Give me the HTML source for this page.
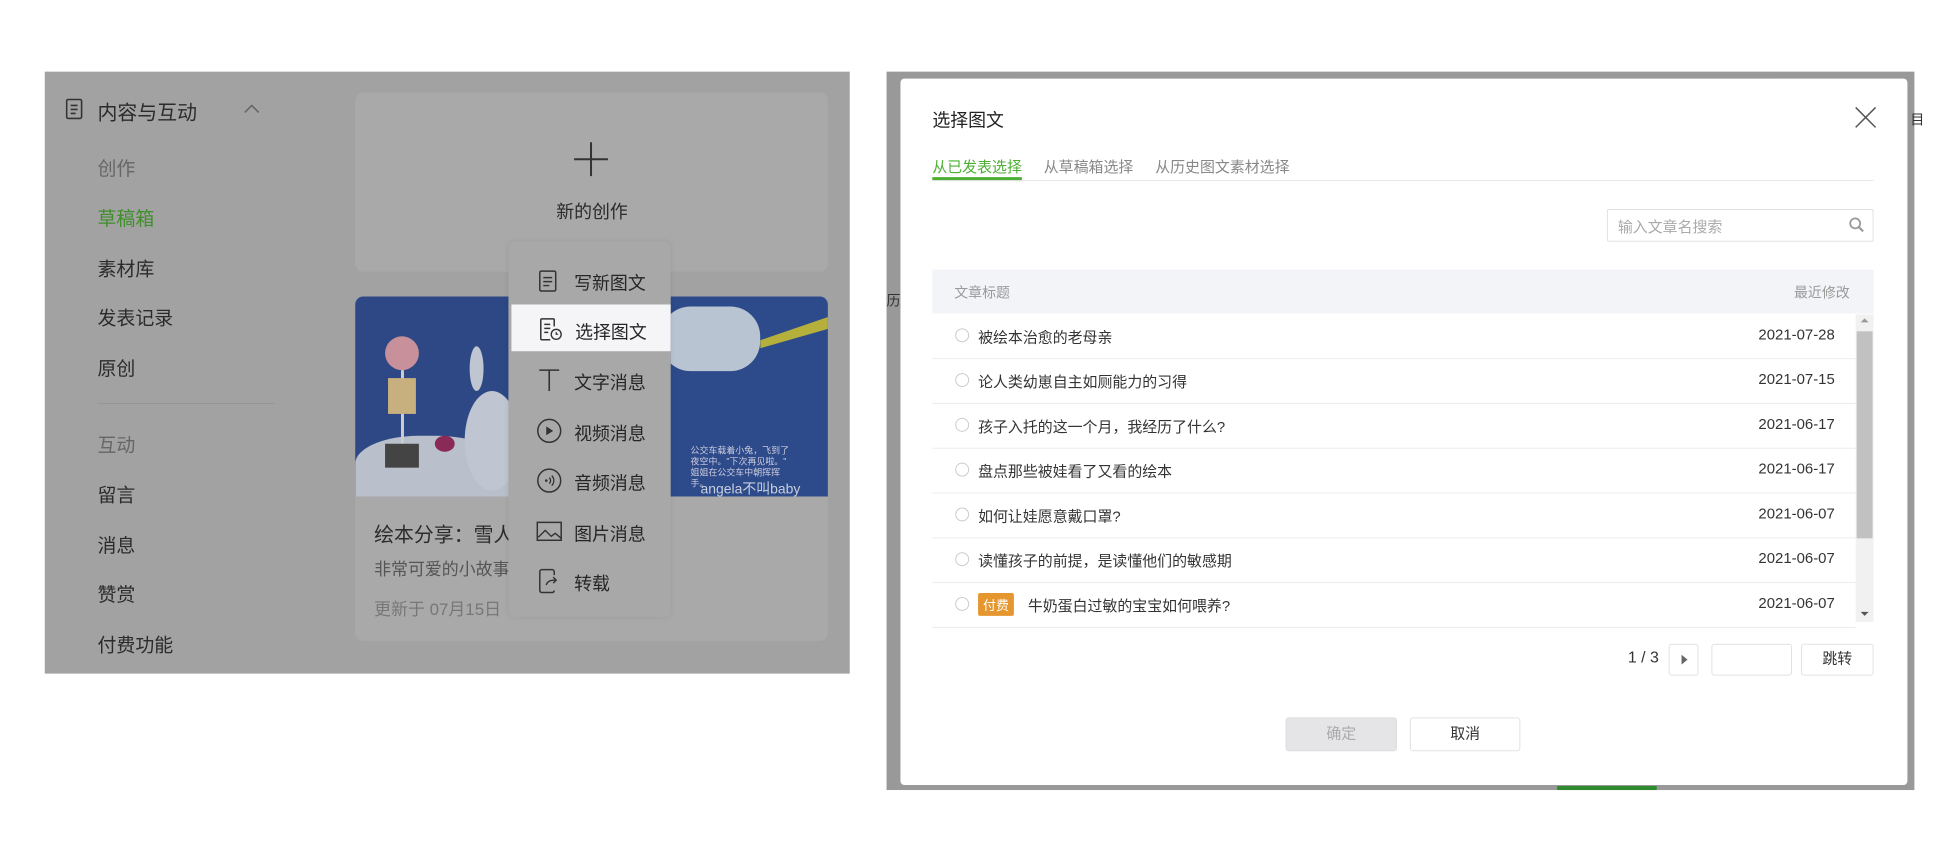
<!DOCTYPE html>
<html><head><meta charset="utf-8"><style>
*{margin:0;padding:0;box-sizing:border-box}
body{width:1936px;height:852px;background:#fff;position:relative;overflow:hidden;font-family:"Liberation Sans","Noto Sans CJK SC",sans-serif;color:#333}
#w{position:absolute;left:0;top:0;width:1936px;height:852px;transform:scale(0.995);transform-origin:0 0}
.a{position:absolute;white-space:nowrap}
.lp{position:absolute;left:45px;top:72px;width:809px;height:605px;background:#a2a2a2}
.side{font-size:19px;color:#2b2b2b}
.card{position:absolute;background:#a9a9a9;border-radius:8px}
.dd{position:absolute;left:511px;top:243px;width:163px;height:377px;background:#a8a8a8;border-radius:6px;box-shadow:0 0 6px rgba(0,0,0,.08)}
.di{font-size:18px;color:#262626}
.ic{position:absolute}
.ov{position:absolute;left:891px;top:72px;width:1033px;height:722px;background:#999}
.md{position:absolute;left:905px;top:79px;width:1012px;height:710px;background:#fff;border-radius:4px}
.row{position:absolute;left:937px;width:928px;height:45px;border-bottom:1px solid #ececec;font-size:15px;color:#333}
.row .r{position:absolute;left:23px;top:14px;width:14px;height:14px;border:1px solid #ccc;border-radius:50%}
.row .t{position:absolute;left:46px;top:12px}
.row .d{position:absolute;right:21px;top:12px;font-size:15px}
.btn{position:absolute;border:1px solid #e2e2e2;border-radius:3px;background:#fff;font-size:15px;text-align:center}
</style></head><body><div id="w">
<div class="lp"></div>
<svg class="ic" style="left:66px;top:99px" width="18" height="22" viewBox="0 0 18 22"><rect x="1" y="1" width="15" height="19" rx="1.5" fill="none" stroke="#333" stroke-width="1.6"/><path d="M5 7h7M5 11h7M5 15h5" stroke="#333" stroke-width="1.6"/></svg>
<div class="a side" style="left:98px;top:97px;font-size:20px">内容与互动</div>
<svg class="ic" style="left:244px;top:103px" width="18" height="12"><path d="M2 10l7-7 7 7" fill="none" stroke="#666" stroke-width="1.6"/></svg>
<div class="a side" style="left:98px;top:155px;color:#666">创作</div>
<div class="a side" style="left:98px;top:205px;color:#3f8f2a">草稿箱</div>
<div class="a side" style="left:98px;top:256px">素材库</div>
<div class="a side" style="left:98px;top:305px">发表记录</div>
<div class="a side" style="left:98px;top:356px">原创</div>
<div class="a" style="left:98px;top:405px;width:178px;height:1px;background:#959595"></div>
<div class="a side" style="left:98px;top:433px;color:#666">互动</div>
<div class="a side" style="left:98px;top:483px">留言</div>
<div class="a side" style="left:98px;top:534px">消息</div>
<div class="a side" style="left:98px;top:583px">赞赏</div>
<div class="a side" style="left:98px;top:634px">付费功能</div>
<div class="card" style="left:357px;top:93px;width:475px;height:180px"></div>
<svg class="ic" style="left:576px;top:142px" width="36" height="36"><path d="M18 1v34M1 18h34" stroke="#333" stroke-width="2"/></svg>
<div class="a" style="left:559px;top:199px;font-size:18px;color:#2b2b2b">新的创作</div>
<div class="card" style="left:357px;top:298px;width:475px;height:346px"></div>
<div class="a" style="left:357px;top:298px;width:155px;height:201px;background:#2d4885;border-radius:8px 0 0 0;overflow:hidden">
 <div style="position:absolute;left:0;top:140px;width:160px;height:70px;background:#b9bfcb;border-radius:40% 50% 0 0"></div>
 <div style="position:absolute;left:30px;top:40px;width:34px;height:34px;border-radius:50%;background:#c8909a"></div>
 <div style="position:absolute;left:46px;top:74px;width:3px;height:80px;background:#ccc"></div>
 <div style="position:absolute;left:33px;top:82px;width:28px;height:36px;background:#c8b07e"></div>
 <div style="position:absolute;left:30px;top:148px;width:34px;height:24px;background:#444"></div>
 <div style="position:absolute;left:110px;top:95px;width:55px;height:100px;border-radius:50%;background:#bfc6d2"></div>
 <div style="position:absolute;left:115px;top:50px;width:14px;height:45px;border-radius:50%;background:#bfc6d2"></div>
 <div style="position:absolute;left:80px;top:140px;width:20px;height:16px;border-radius:50%;background:#8a2b57"></div>
</div>
<div class="a" style="left:674px;top:298px;width:158px;height:201px;background:#2d4a8a;border-radius:0 8px 0 0;overflow:hidden">
 <div style="position:absolute;left:-10px;top:10px;width:100px;height:65px;border-radius:30px;background:#b9c4d3"></div>
 <div style="position:absolute;left:90px;top:20px;width:70px;height:40px;background:#b5b03c;clip-path:polygon(0 60%,100% 0,100% 30%,0 80%)"></div>
 <div style="position:absolute;left:20px;top:150px;font-size:9px;color:#ccd;line-height:11px;white-space:normal;width:100px">公交车载着小兔，飞到了夜空中。"下次再见啦。" 姐姐在公交车中朝挥挥手。</div>
 <div style="position:absolute;left:30px;top:183px;font-size:14px;color:#c8cfdc">angela不叫baby</div>
</div>
<div class="a" style="left:376px;top:521px;font-size:20px;color:#2b2b2b">绘本分享：雪人</div>
<div class="a" style="left:376px;top:558px;font-size:17px;color:#555">非常可爱的小故事</div>
<div class="a" style="left:376px;top:598px;font-size:17px;color:#777">更新于 07月15日</div>
<div class="dd"></div>
<div class="a" style="left:514px;top:306px;width:160px;height:47px;background:#f5f5f7"></div>
<svg class="ic" style="left:541px;top:271px" width="20" height="24"><rect x="1.5" y="1.5" width="16" height="20" rx="1.5" fill="none" stroke="#333" stroke-width="1.5"/><path d="M5 8h9M5 12h9M5 16h6" stroke="#333" stroke-width="1.5"/></svg>
<div class="a di" style="left:577px;top:271px">写新图文</div>
<svg class="ic" style="left:542px;top:319px" width="24" height="24"><path d="M15 9V2.5a1 1 0 0 0-1-1H2.5a1 1 0 0 0-1 1v19a1 1 0 0 0 1 1H11" fill="none" stroke="#333" stroke-width="1.5"/><path d="M5 7h6M5 11h6M5 15h4" stroke="#333" stroke-width="1.5"/><circle cx="17" cy="17" r="5" fill="none" stroke="#333" stroke-width="1.4"/><path d="M17 14.5V17h2" fill="none" stroke="#333" stroke-width="1.2"/></svg>
<div class="a di" style="left:578px;top:320px">选择图文</div>
<svg class="ic" style="left:541px;top:370px" width="22" height="24"><path d="M1 2h20M11 2v21" stroke="#333" stroke-width="1.6"/></svg>
<div class="a di" style="left:577px;top:371px">文字消息</div>
<svg class="ic" style="left:539px;top:420px" width="26" height="26"><circle cx="13" cy="13" r="11.5" fill="none" stroke="#333" stroke-width="1.5"/><path d="M10 8.5l7 4.5-7 4.5z" fill="#333"/></svg>
<div class="a di" style="left:577px;top:422px">视频消息</div>
<svg class="ic" style="left:539px;top:470px" width="26" height="26"><circle cx="13" cy="13" r="11.5" fill="none" stroke="#333" stroke-width="1.5"/><circle cx="10" cy="13" r="1.3" fill="#333"/><path d="M13 10a4 4 0 0 1 0 6M15.5 8a7 7 0 0 1 0 10" fill="none" stroke="#333" stroke-width="1.3"/></svg>
<div class="a di" style="left:577px;top:472px">音频消息</div>
<svg class="ic" style="left:539px;top:524px" width="26" height="20"><rect x="1" y="1" width="24" height="18" fill="none" stroke="#333" stroke-width="1.5"/><path d="M2 16l7-7 6 6 4-3 6 5" fill="none" stroke="#333" stroke-width="1.4"/></svg>
<div class="a di" style="left:577px;top:523px">图片消息</div>
<svg class="ic" style="left:541px;top:571px" width="22" height="26"><path d="M16 7V3.5a2 2 0 0 0-2-2H3.5a2 2 0 0 0-2 2v19a2 2 0 0 0 2 2H14a2 2 0 0 0 2-2" fill="none" stroke="#333" stroke-width="1.5"/><path d="M8 17c1-4 4-5 10-5M15 9l3 3-3 3" fill="none" stroke="#333" stroke-width="1.4"/></svg>
<div class="a di" style="left:577px;top:573px">转载</div>
<div class="ov"></div>
<div class="a" style="left:891px;top:292px;font-size:14px;color:#333">历</div>
<div class="a" style="left:1920px;top:110px;font-size:14px;color:#333">目</div>
<div class="a" style="left:1565px;top:790px;width:100px;height:4px;background:#2d8a2d"></div>
<div class="md"></div>
<div class="a" style="left:937px;top:107px;font-size:18px;color:#222">选择图文</div>
<svg class="ic" style="left:1864px;top:107px" width="22" height="22"><path d="M1 1l20 20M21 1L1 21" stroke="#555" stroke-width="1.5"/></svg>
<div class="a" style="left:937px;top:157px;font-size:15px;color:#4caf33">从已发表选择</div>
<div class="a" style="left:1049px;top:157px;font-size:15px;color:#888">从草稿箱选择</div>
<div class="a" style="left:1161px;top:157px;font-size:15px;color:#888">从历史图文素材选择</div>
<div class="a" style="left:937px;top:181px;width:946px;height:1px;background:#e5e5e5"></div>
<div class="a" style="left:937px;top:178px;width:90px;height:3px;background:#4caf33"></div>
<div class="a" style="left:1615px;top:210px;width:268px;height:33px;border:1px solid #e2e2e2;border-radius:2px"></div>
<div class="a" style="left:1626px;top:217px;font-size:15px;color:#aaa">输入文章名搜索</div>
<svg class="ic" style="left:1858px;top:218px" width="16" height="16"><circle cx="6.5" cy="6.5" r="5" fill="none" stroke="#999" stroke-width="1.8"/><path d="M10 10l4.5 4.5" stroke="#999" stroke-width="2.2"/></svg>
<div class="a" style="left:937px;top:271px;width:946px;height:44px;background:#f3f4f8"></div>
<div class="a" style="left:959px;top:284px;font-size:14px;color:#999">文章标题</div>
<div class="a" style="left:1803px;top:284px;font-size:14px;color:#999">最近修改</div>
<div class="row" style="top:316px"><div class="r"></div><div class="t">被绘本治愈的老母亲</div><div class="d">2021-07-28</div></div>
<div class="row" style="top:361px"><div class="r"></div><div class="t">论人类幼崽自主如厕能力的习得</div><div class="d">2021-07-15</div></div>
<div class="row" style="top:406px"><div class="r"></div><div class="t">孩子入托的这一个月，我经历了什么?</div><div class="d">2021-06-17</div></div>
<div class="row" style="top:451px"><div class="r"></div><div class="t">盘点那些被娃看了又看的绘本</div><div class="d">2021-06-17</div></div>
<div class="row" style="top:496px"><div class="r"></div><div class="t">如何让娃愿意戴口罩?</div><div class="d">2021-06-07</div></div>
<div class="row" style="top:541px"><div class="r"></div><div class="t">读懂孩子的前提，是读懂他们的敏感期</div><div class="d">2021-06-07</div></div>
<div class="row" style="top:586px"><div class="r"></div><div class="t" style="left:46px;top:10px;background:#e5962f;color:#fff;font-size:13px;padding:2px 5px;border-radius:2px">付费</div><div class="t" style="left:96px">牛奶蛋白过敏的宝宝如何喂养?</div><div class="d">2021-06-07</div></div>
<div class="a" style="left:1865px;top:316px;width:18px;height:309px;background:#f1f1f1"></div>
<div class="a" style="left:1866px;top:333px;width:16px;height:208px;background:#c1c1c1"></div>
<div class="a" style="left:1870px;top:320px;width:0;height:0;border:4px solid transparent;border-bottom-color:#999;border-top:0"></div>
<div class="a" style="left:1870px;top:615px;width:0;height:0;border:4px solid transparent;border-top-color:#555;border-bottom:0"></div>
<div class="a" style="left:1636px;top:653px;font-size:16px;color:#333">1 / 3</div>
<div class="btn" style="left:1677px;top:647px;width:30px;height:32px"></div>
<div class="a" style="left:1690px;top:658px;width:0;height:0;border:5px solid transparent;border-left:6px solid #666;border-right:0"></div>
<div class="btn" style="left:1720px;top:647px;width:81px;height:32px"></div>
<div class="btn" style="left:1810px;top:647px;width:73px;height:32px;line-height:30px;color:#333">跳转</div>
<div class="btn" style="left:1292px;top:721px;width:112px;height:34px;line-height:32px;background:#e5e5e8;color:#aaa;border-color:#ddd">确定</div>
<div class="btn" style="left:1417px;top:721px;width:111px;height:34px;line-height:32px;color:#333">取消</div>
</div></body></html>
